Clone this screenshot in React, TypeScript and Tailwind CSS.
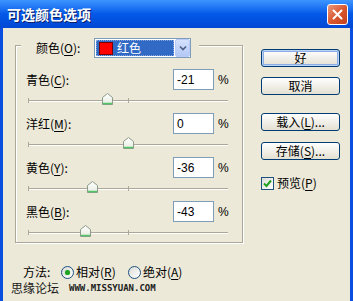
import type { ReactNode } from 'react';

/* Photoshop "可选颜色选项" (Selective Color) dialog, Windows XP Luna chrome. */

const FONT = "font-['Noto_Sans_CJK_SC','Noto_Sans',sans-serif]";

const rows = [
  { label: '青色', key: 'C', value: -21 },
  { label: '洋红', key: 'M', value: 0 },
  { label: '黄色', key: 'Y', value: -36 },
  { label: '黑色', key: 'B', value: -43 },
];

function Mn({ children }: { children: ReactNode }) {
  return <span className="underline underline-offset-[2px]">{children}</span>;
}

function XpButton({ children, primary }: { children: ReactNode; primary?: boolean }) {
  return (
    <button
      className={
        'flex h-[18px] w-[79px] items-center justify-center rounded-[3px] border border-[#003c74] bg-gradient-to-b from-white to-[#e3e0d2] text-[12px] leading-none text-black ' +
        (primary ? 'shadow-[inset_0_0_0_1px_#bcd4f6,inset_0_0_0_2px_#89ade4]' : '')
      }
    >
      {children}
    </button>
  );
}

function Thumb() {
  return (
    <svg width="11" height="12" viewBox="0 0 11 12">
      <defs>
        <linearGradient id="tg" x1="0" y1="0" x2="0" y2="1">
          <stop offset="0" stopColor="#ffffff" />
          <stop offset="1" stopColor="#e6ece0" />
        </linearGradient>
      </defs>
      <path d="M0.5 4.5 L5.5 0.5 L10.5 4.5 V11.5 H0.5 Z" fill="url(#tg)" stroke="#8c9a8a" />
      <path d="M1 10.5 H10" stroke="#55c46a" strokeWidth="1.5" />
    </svg>
  );
}

function Slider({ value }: { value: number }) {
  return (
    <div className="relative ml-[12px] h-[17px] w-[200px] pt-[10px]">
      <div className="h-[2px] border-t border-b border-t-[#aca899] border-b-white" />
      <div className="absolute left-0 top-[8px] h-[5px] w-px bg-[#aca899]" />
      <div className="absolute left-[100px] top-[8px] h-[5px] w-px bg-[#aca899]" />
      <div className="absolute top-[3px]" style={{ left: value + 100 - 5 }}>
        <Thumb />
      </div>
    </div>
  );
}

function Row({ label, k, value }: { label: string; k: string; value: number }) {
  return (
    <div className="flex flex-col">
      <div className="flex h-[21px] items-center pl-[10px]">
        <span className="w-[147px] text-[12px]">
          {label}(<Mn>{k}</Mn>):
        </span>
        <div className="flex h-[21px] w-[41px] items-center border border-[#7f9db9] bg-white pl-[3px] font-['Liberation_Sans',sans-serif] text-[12px]">
          {value}
        </div>
        <span className="ml-[4px] font-['Liberation_Sans',sans-serif] text-[12px]">%</span>
      </div>
      <Slider value={value} />
    </div>
  );
}

function Dropdown() {
  return (
    <div className="flex h-[20px] w-[97px] border border-[#7f9db9] bg-white">
      <div className="my-[1px] ml-[1px] flex flex-1 items-center border border-dotted border-[#8aa6e0] bg-[#316ac5] pl-[2px]">
        <div className="h-[13px] w-[14px] border border-[#7a0000] bg-[#ff0000]" />
        <span className="ml-[4px] text-[12px] leading-none text-white">红色</span>
      </div>
      <div className="ml-[1px] flex w-[15px] items-center justify-center rounded-[2px] border border-[#b8cbf8] bg-gradient-to-b from-[#d4e1fd] to-[#b3c8f5]">
        <svg width="8" height="6" viewBox="0 0 8 6">
          <path d="M1 1.5 L4 4.5 L7 1.5" fill="none" stroke="#4d6185" strokeWidth="1.6" />
        </svg>
      </div>
    </div>
  );
}

function Radio({ checked }: { checked?: boolean }) {
  return (
    <span className="flex h-[13px] w-[13px] items-center justify-center rounded-full border border-[#1c5180] bg-gradient-to-br from-[#dcdcd7] to-white">
      {checked && <span className="h-[5px] w-[5px] rounded-full bg-[#21a121] shadow-[0_0_1px_#5fd35f]" />}
    </span>
  );
}

export default function App() {
  return (
    <div className={`flex h-[301px] w-[353px] flex-col overflow-hidden bg-[#0a4ee0] text-black ${FONT}`}>
      {/* title bar */}
      <div className="flex h-[28px] shrink-0 items-center bg-gradient-to-b from-[#3d95ff] via-[#0458e8] to-[#0048d4] pl-[7px] pr-[5px]">
        <span className="text-[14px] font-bold leading-none text-white [text-shadow:1px_1px_0_#0a1e6a]">可选颜色选项</span>
        <div className="ml-auto flex h-[21px] w-[21px] items-center justify-center rounded-[3px] border border-white bg-gradient-to-br from-[#e8987a] via-[#d9582f] to-[#c2401c]">
          <svg width="11" height="11" viewBox="0 0 11 11">
            <path d="M1.5 1.5 L9.5 9.5 M9.5 1.5 L1.5 9.5" stroke="white" strokeWidth="2" strokeLinecap="round" />
          </svg>
        </div>
      </div>

      {/* body */}
      <div className="mx-[3px] flex flex-1 flex-col bg-[#ece9d8]">
        <div className="flex pl-[12px]">
          {/* group box */}
          <div className="mt-[17px] w-[228px] border border-[#aca899] pb-[3px] shadow-[1px_1px_0_#fff,inset_1px_1px_0_#fff]">
            <div className="-mt-[8px] ml-[5px] flex h-[20px] w-fit items-center bg-[#ece9d8] pl-[15px] pr-[8px]">
              <span className="w-[58px] text-[12px]">
                颜色(<Mn>O</Mn>):
              </span>
              <Dropdown />
            </div>
            <div className="mt-[11px] flex flex-col gap-[6px]">
              {rows.map((r) => (
                <Row key={r.key} label={r.label} k={r.key} value={r.value} />
              ))}
            </div>
          </div>

          {/* buttons */}
          <div className="ml-[18px] flex flex-col pt-[21px]">
            <XpButton primary>好</XpButton>
            <div className="mt-[10px]">
              <XpButton>取消</XpButton>
            </div>
            <div className="mt-[18px]">
              <XpButton>
                载入(<Mn>L</Mn>)...
              </XpButton>
            </div>
            <div className="mt-[11px]">
              <XpButton>
                存储(<Mn>S</Mn>)...
              </XpButton>
            </div>
            <div className="mt-[14px] flex items-center">
              <span className="flex h-[13px] w-[13px] items-center justify-center border border-[#1c5180] bg-gradient-to-br from-[#dcdcd7] to-white">
                <svg width="9" height="9" viewBox="0 0 9 9">
                  <path d="M1 4.5 L3.5 7 L8 1.5" fill="none" stroke="#21a121" strokeWidth="2" />
                </svg>
              </span>
              <span className="ml-[3px] text-[12px]">
                预览(<Mn>P</Mn>)
              </span>
            </div>
          </div>
        </div>

        {/* method */}
        <div className="mt-[22px] flex h-[14px] items-center pl-[20px] text-[12px] leading-none">
          <span className="w-[38px]">方法:</span>
          <Radio checked />
          <span className="ml-[2px] w-[52px]">
            相对(<Mn>R</Mn>)
          </span>
          <Radio />
          <span className="ml-[2px]">
            绝对(<Mn>A</Mn>)
          </span>
        </div>

        {/* watermark */}
        <div className="mt-[2px] flex h-[14px] items-center pl-[8px]">
          <span className="text-[12px] leading-none text-[#1a1a1a]">思缘论坛</span>
          <span className="ml-[10px] font-['DejaVu_Sans_Mono',monospace] text-[9px] font-bold uppercase leading-none text-[#222]">
            www.missyuan.com
          </span>
        </div>
      </div>
    </div>
  );
}
